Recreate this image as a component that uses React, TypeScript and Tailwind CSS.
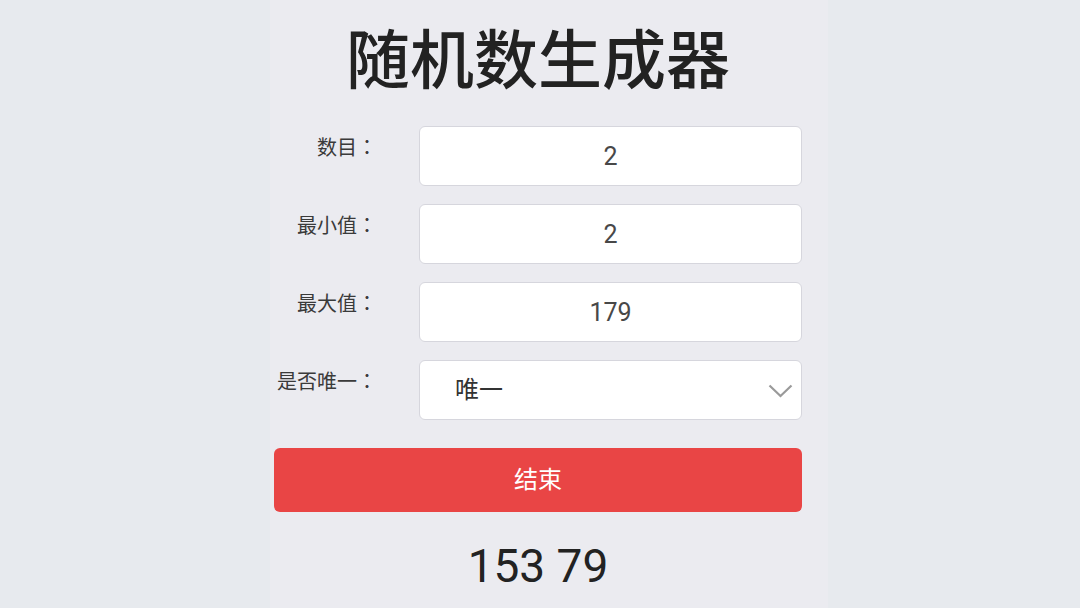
// App.tsx

import { useState } from "react";

const font = {
  fontFamily: 'Roboto, "Noto Sans", "Noto Sans CJK SC", sans-serif',
};

interface Field {
  label: string;
  value: string;
}

const fields: Field[] = [
  { label: "数目", value: "2" },
  { label: "最小值", value: "2" },
  { label: "最大值", value: "179" },
];

function Row({
  label,
  children,
}: {
  label: string;
  children: React.ReactNode;
}) {
  return (
    <div className="flex h-[60px] items-start">
      <div className="w-[145px] pt-[7px] pr-[42px] text-right text-[20px] leading-[28px] text-[#3a3a3a]">
        {label}
        {/* 繁体字形的冒号居中 */}
        <span style={{ fontFamily: '"Noto Sans CJK TC", sans-serif' }}>：</span>
      </div>
      {children}
    </div>
  );
}

export default function App() {
  const [values, setValues] = useState(fields.map((f) => f.value));
  const [unique, setUnique] = useState("unique");

  return (
    <div className="flex min-h-screen justify-center bg-[#e7eaee]" style={font}>
      <div className="ml-[18px] min-h-screen w-[558px] bg-[#ebebf0] pl-[4px]">
        <main className="flex w-[528px] flex-col">
          <h1 className="pt-[23px] text-center text-[64px] leading-[77px] font-medium text-[#222]">
            随机数生成器
          </h1>

          <div className="mt-[26px] flex flex-col gap-[18px]">
            {fields.map((field, i) => (
              <Row key={field.label} label={field.label}>
                <input
                  value={values[i]}
                  onChange={(e) =>
                    setValues((prev) =>
                      prev.map((v, j) => (j === i ? e.target.value : v)),
                    )
                  }
                  className="h-[60px] flex-1 rounded-[6px] border border-[#d6d6dd] bg-white text-center text-[25px] text-[#484848] outline-none"
                />
              </Row>
            ))}

            <Row label="是否唯一">
              <div className="relative h-[60px] flex-1">
                <select
                  value={unique}
                  onChange={(e) => setUnique(e.target.value)}
                  className="h-full w-full appearance-none rounded-[6px] border border-[#d6d6dd] bg-white pl-[35px] text-[24px] text-[#333] outline-none"
                >
                  <option value="unique">唯一</option>
                  <option value="repeat">可重复</option>
                </select>
                <svg
                  className="pointer-events-none absolute top-[24px] right-[9px]"
                  width="25"
                  height="14"
                  viewBox="0 0 25 14"
                  fill="none"
                >
                  <path
                    d="M1.5 1.5 L12.5 12 L23.5 1.5"
                    stroke="#9a9a9a"
                    strokeWidth="2.2"
                  />
                </svg>
              </div>
            </Row>
          </div>

          <button className="mt-[28px] h-[64px] w-full rounded-[6px] bg-[#e94545] text-[24px] text-white">
            结束
          </button>

          <div className="mt-[27px] text-center text-[46px] leading-[54px] text-[#222]">
            153 79
          </div>
        </main>
      </div>
    </div>
  );
}
